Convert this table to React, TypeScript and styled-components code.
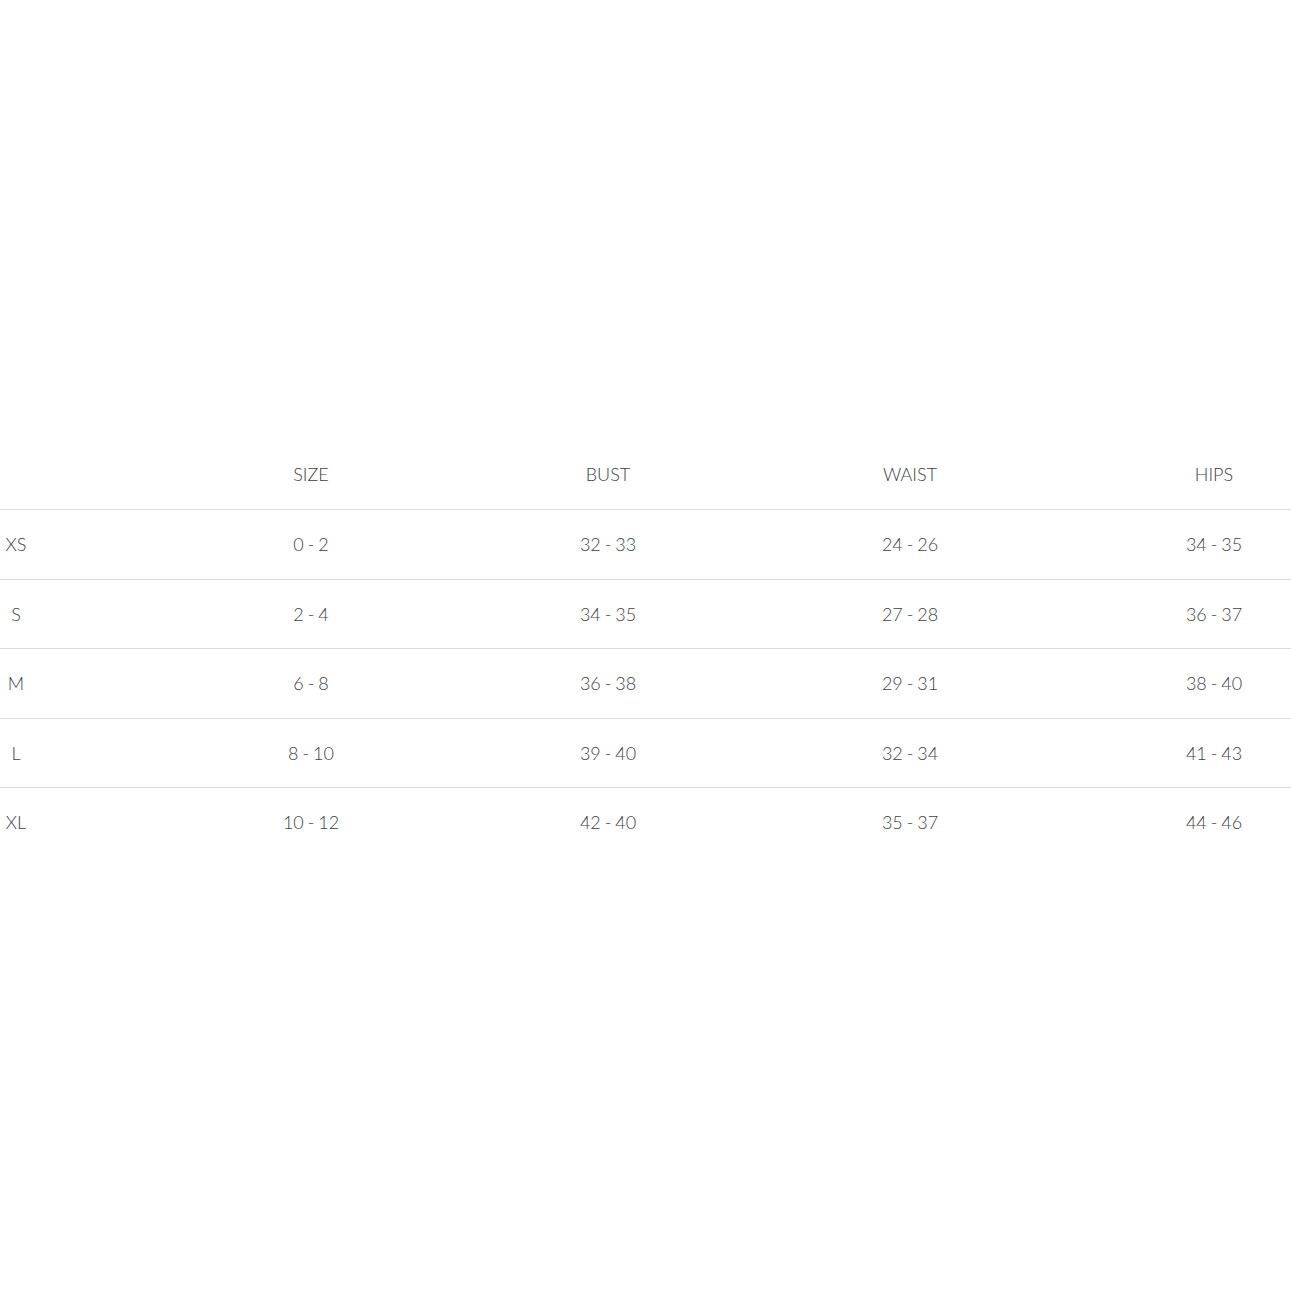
import React from "react";
import styled, { createGlobalStyle } from "styled-components";

const Global = createGlobalStyle`
  html, body { margin: 0; padding: 0; background: #fff; overflow-x: hidden; }
  body { font-family: Lato, "Open Sans", sans-serif; }
`;

const Page = styled.div`
  width: 1291px;
  height: 1291px;
  overflow: hidden;
  padding-top: 439px;
  box-sizing: border-box;
`;

const Table = styled.div`
  width: 1365px;
  display: flex;
  flex-direction: column;
`;

const Row = styled.div<{ $header?: boolean }>`
  display: grid;
  grid-template-columns: 163px 296px 298px 306px 302px;
  align-items: center;
  box-sizing: border-box;
  height: ${(p) => (p.$header ? "70px" : "69.5px")};
  border-top: ${(p) => (p.$header ? "none" : "1px solid #dcdcdc")};
`;

const Cell = styled.div`
  font-family: Lato, "Open Sans", sans-serif;
  font-weight: 300;
  font-size: 18px;
  line-height: 22px;
  color: #3f3f3f;
  text-align: center;
  word-spacing: -1px;
`;

const FirstCell = styled(Cell)`
  padding-right: 131px;
`;

const headers = ["SIZE", "BUST", "WAIST", "HIPS"];
const rows: string[][] = [
  ["XS", "0 - 2", "32 - 33", "24 - 26", "34 - 35"],
  ["S", "2 - 4", "34 - 35", "27 - 28", "36 - 37"],
  ["M", "6 - 8", "36 - 38", "29 - 31", "38 - 40"],
  ["L", "8 - 10", "39 - 40", "32 - 34", "41 - 43"],
  ["XL", "10 - 12", "42 - 40", "35 - 37", "44 - 46"],
];

export default function App() {
  return (
    <>
      <Global />
      <Page>
        <Table>
          <Row $header>
            <FirstCell />
            {headers.map((h) => (
              <Cell key={h}>{h}</Cell>
            ))}
          </Row>
          {rows.map((r) => (
            <Row key={r[0]}>
              <FirstCell>{r[0]}</FirstCell>
              {r.slice(1).map((v, i) => (
                <Cell key={i}>{v}</Cell>
              ))}
            </Row>
          ))}
        </Table>
      </Page>
    </>
  );
}
